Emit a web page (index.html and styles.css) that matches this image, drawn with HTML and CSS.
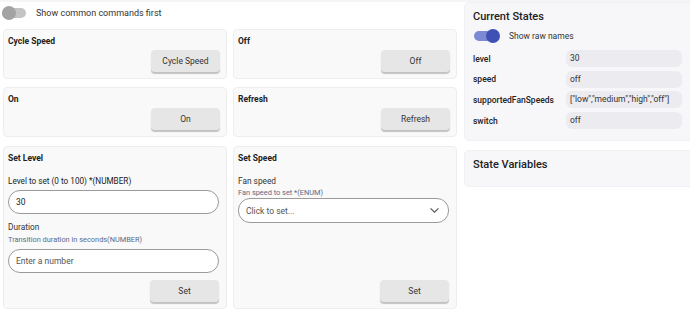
FILE: index.html
```html
<!DOCTYPE html>
<html lang="en">
<head>
  <meta charset="UTF-8">
  <title>Device Commands</title>
  <meta name="viewport" content="width=device-width, initial-scale=1.0">
  <link rel="stylesheet" href="styles.css">
</head>
<body>
  <div class="topstrip"></div>
  <div class="page">
    <section class="commands">
      <div class="switch-row">
        <span class="switch"><span class="thumb"></span></span>
        <span class="switch-label">Show common commands first</span>
      </div>

      <div class="grid">
        <div class="card">
          <div class="card-title">Cycle Speed</div>
          <button class="btn">Cycle Speed</button>
        </div>
        <div class="card">
          <div class="card-title">Off</div>
          <button class="btn">Off</button>
        </div>
        <div class="card">
          <div class="card-title">On</div>
          <button class="btn">On</button>
        </div>
        <div class="card">
          <div class="card-title">Refresh</div>
          <button class="btn">Refresh</button>
        </div>

        <div class="card tall">
          <div class="card-title">Set Level</div>
          <label class="field-label" for="level">Level to set (0 to 100) *(NUMBER)</label>
          <input class="pill" id="level" type="text" value="30">
          <div class="param-name">Duration</div>
          <div class="param-desc">Transition duration in seconds(NUMBER)</div>
          <input class="pill second" type="text" placeholder="Enter a number">
          <button class="btn set">Set</button>
        </div>

        <div class="card tall">
          <div class="card-title">Set Speed</div>
          <div class="param-name first">Fan speed</div>
          <div class="param-desc short">Fan speed to set *(ENUM)</div>
          <div class="pill select">
            <span>Click to set...</span>
            <svg width="11" height="7" viewBox="0 0 12 8"><path d="M1.5 1.5 L6 6 L10.5 1.5" fill="none" stroke="#555" stroke-width="1.3"/></svg>
          </div>
          <button class="btn set">Set</button>
        </div>
      </div>
    </section>

    <aside class="side">
      <div class="panel">
        <h2>Current States</h2>
        <div class="switch-row raw">
          <span class="switch on"><span class="thumb"></span></span>
          <span class="switch-label">Show raw names</span>
        </div>
        <div class="state-row"><span class="state-name">level</span><span class="state-value">30</span></div>
        <div class="state-row"><span class="state-name">speed</span><span class="state-value">off</span></div>
        <div class="state-row"><span class="state-name">supportedFanSpeeds</span><span class="state-value">["low","medium","high","off"]</span></div>
        <div class="state-row"><span class="state-name">switch</span><span class="state-value">off</span></div>
      </div>
      <div class="panel vars">
        <h2>State Variables</h2>
      </div>
    </aside>
  </div>
</body>
</html>
```

FILE: styles.css
```css
:root {
  --card-bg: #f9f9f9;
  --card-border: #eeeeee;
  --panel-bg: #f7f7fa;
  --btn-bg: #e6e6e6;
  --indigo: #3f51b5;
  --text: #222;
}

html, body {
  margin: 0;
  padding: 0;
  overflow: hidden;
}

body {
  background: white;
  font-family: Roboto, "Noto Sans", sans-serif;
  color: var(--text);
}

.topstrip {
  height: 2px;
  background: #f5f5f5;
}

.page {
  display: flex;
  align-items: flex-start;
}

.commands {
  width: 452px;
  padding-left: 3px;
}

.switch-row {
  display: flex;
  align-items: center;
  height: 20px;
  margin-top: 1px;
}

.switch {
  position: relative;
  display: inline-block;
  width: 24px;
  height: 10px;
  border-radius: 5px;
  background: #c4c4c4;
  margin-left: -1px;
}

.switch .thumb {
  position: absolute;
  left: 0;
  top: -2px;
  width: 14px;
  height: 14px;
  border-radius: 50%;
  background: #a3a3a3;
}

.switch.on {
  background: #7c8ad4;
}

.switch.on .thumb {
  left: auto;
  right: -2px;
  background: var(--indigo);
}

.switch-label {
  font-size: 9px;
  margin-left: 10px;
  color: #333;
}

.grid {
  display: grid;
  grid-template-columns: 224px 224px;
  column-gap: 6px;
  row-gap: 8px;
  margin-top: 6px;
}

.card {
  display: flex;
  flex-direction: column;
  background: var(--card-bg);
  border: 1px solid var(--card-border);
  border-radius: 4px;
  padding: 4px 6px 4px 3px;
  height: 50px;
  box-sizing: border-box;
}

.card.tall {
  height: 163px;
  margin-top: 1px;
}

.card-title {
  font-size: 8.5px;
  font-weight: 700;
  line-height: 14px;
  margin-left: 1px;
}

.btn {
  align-self: flex-end;
  margin-top: auto;
  width: 69px;
  height: 22px;
  padding: 0;
  border: none;
  border-radius: 4px;
  background: var(--btn-bg);
  box-shadow: 0 2px 1px rgba(0, 0, 0, 0.22);
  font-family: Roboto, "Noto Sans", sans-serif;
  font-size: 8.5px;
  color: #333;
  margin-bottom: 2px;
}

.field-label {
  font-size: 8.2px;
  line-height: 14px;
  margin-top: 9px;
  margin-left: 1px;
}

.pill {
  height: 24px;
  box-sizing: border-box;
  border: 1px solid #9a9a9a;
  border-radius: 12px;
  background: white;
  margin: 2px 1px 0 1px;
  padding: 0 10px 0 7px;
  font-family: Roboto, "Noto Sans", sans-serif;
  font-size: 8.5px;
  color: #222;
  outline: none;
}

.pill::placeholder {
  color: #555;
}

.pill.second {
  margin-top: 3px;
}

.param-name {
  font-size: 8.3px;
  line-height: 14px;
  margin-top: 6px;
  margin-left: 1px;
  color: #333;
}

.param-name.first {
  margin-top: 9px;
}

.param-desc {
  font-size: 7.4px;
  line-height: 12px;
  color: #5b6b87;
  margin-left: 1px;
}

.param-desc.short {
  line-height: 10px;
}

.select {
  display: flex;
  align-items: center;
  justify-content: space-between;
  height: 25px;
  margin-top: 0;
  color: #555;
  padding-right: 8px;
}

.btn.set {
  margin-right: 1px;
}

.side {
  margin-left: 9px;
  margin-right: -6px;
  flex: 1;
}

.panel {
  background: var(--panel-bg);
  border: 1px solid #f0f0f4;
  border-radius: 5px;
  padding: 5px 8px 0 8px;
  height: 139px;
  box-sizing: border-box;
}

.panel h2 {
  font-size: 11px;
  font-weight: 500;
  line-height: 18px;
  margin: 0;
}

.switch-row.raw {
  margin-top: 0;
  margin-left: 2px;
}

.switch-row.raw .switch-label {
  margin-left: 11px;
  font-size: 8.5px;
}

.state-row {
  display: flex;
  align-items: center;
  height: 17px;
  margin-top: 3.7px;
}

.switch-row.raw + .state-row {
  margin-top: 4px;
}

.state-name {
  width: 93px;
  font-size: 8.5px;
  font-weight: 500;
}

.state-value {
  width: 116px;
  height: 17px;
  line-height: 17px;
  box-sizing: border-box;
  background: #ebebf0;
  border-radius: 6px;
  padding-left: 4px;
  font-size: 8.5px;
  color: #333;
  white-space: nowrap;
  overflow: hidden;
}

.panel.vars {
  margin-top: 9px;
  height: 37px;
  padding-top: 5px;
}
```
